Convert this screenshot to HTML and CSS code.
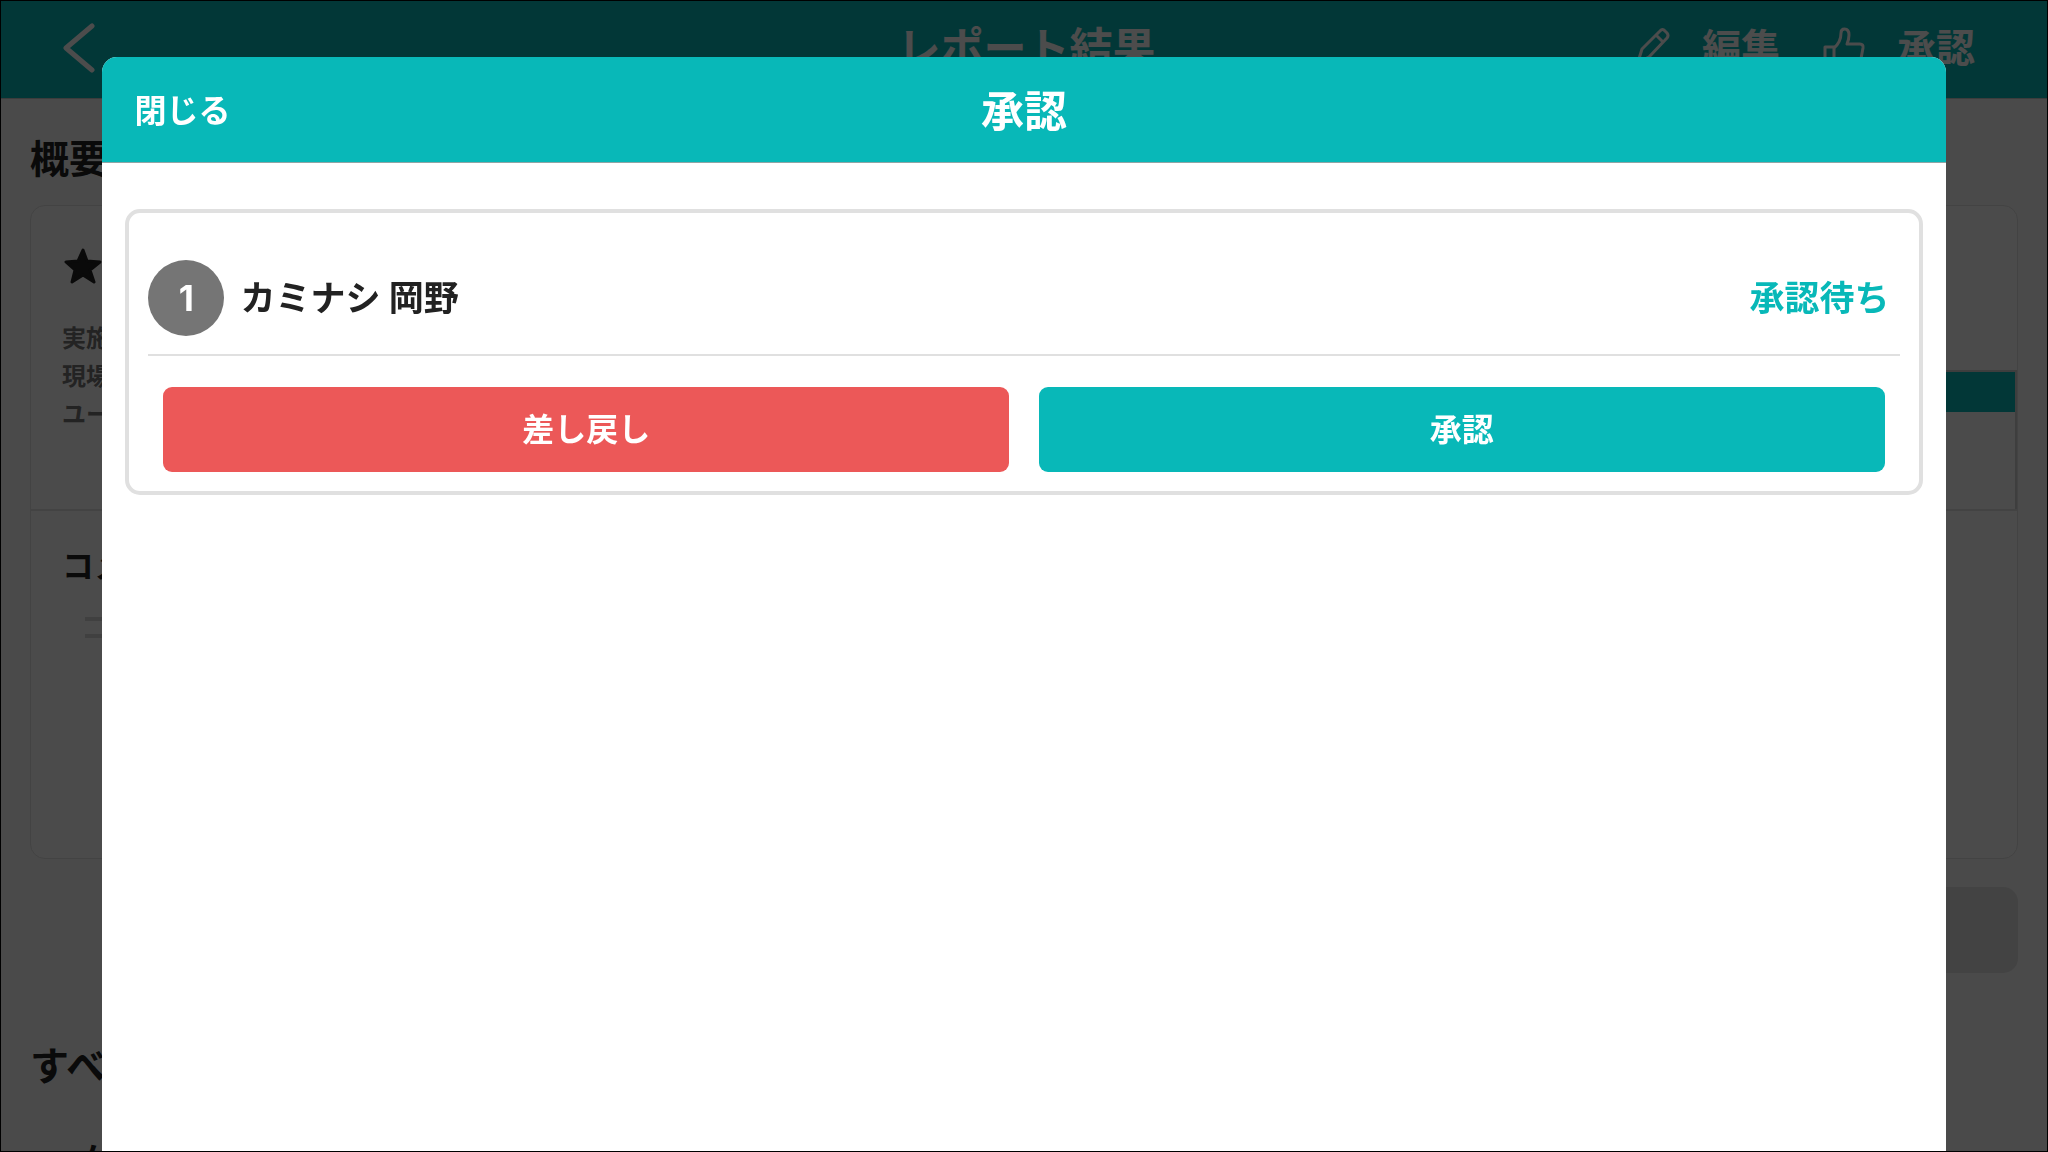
FILE: index.html
```html
<!DOCTYPE html>
<html lang="ja">
<head>
    <meta charset="UTF-8">
    <meta name="viewport" content="width=device-width, initial-scale=1.0">
    <title>レポート結果</title>
    <link rel="stylesheet" href="styles.css">
</head>
<body>

    <div class="page">
        <header class="page-header">
            <button class="back-button" type="button" aria-label="戻る">
                <svg width="34" height="50" viewBox="0 0 34 50"><path d="M30 3 L4 25 L30 47"/></svg>
            </button>
            <h1>レポート結果</h1>
            <nav class="page-actions">
                <button class="action" type="button">
                    <svg width="36" height="42" viewBox="0 0 36 42"><path d="M4 35 L8 22 L26 4 Q28.500 1 31 4 L33 6 Q35 8.500 33 11 L15 30 Z M22 8 L29 15"/></svg>
                    編集
                </button>
                <button class="action" type="button">
                    <svg width="42" height="42" viewBox="0 0 42 42"><path d="M2 20 H11 V40 H2 Z M11 21 Q18 15 18 6 Q18 2 21.500 2 Q26 2 26 8 Q26 12 24 17 H37 Q40.500 17 40 21 L37 37 Q36 40 33 40 H11"/></svg>
                    承認
                </button>
            </nav>
        </header>

        <main class="page-body">
            <h2>概要</h2>
            <section class="report-card">
                <div class="report-summary">
                    <div class="report-info">
                        <svg class="star" width="40" height="40" viewBox="0 0 40 40"><path d="M21 4 L25 15 L38 16 L28 24 L32 36 L21 29 L10 36 L13 24 L4 16 L16 15 Z"/></svg>
                        <p>実施日</p>
                        <p>現場</p>
                        <p>ユーザー</p>
                    </div>
                    <div class="report-result">
                        <div class="result-head"></div>
                    </div>
                </div>
                <div class="report-comment">
                    <h3>コメント</h3>
                    <div class="comment-lines"></div>
                </div>
            </section>
            <button class="more-button" type="button" aria-label="詳細"></button>
            <h2>すべて</h2>
            <p class="next-item">ケース</p>
        </main>
    </div>

    <div class="modal-overlay">
        <div class="modal" role="dialog" aria-labelledby="modal-title">
            <div class="modal-header">
                <button class="close-button" type="button">閉じる</button>
                <h2 id="modal-title">承認</h2>
            </div>
            <div class="modal-body">
                <div class="approval-card">
                    <div class="approver">
                        <span class="step">1</span>
                        <span class="name">カミナシ 岡野</span>
                        <span class="status">承認待ち</span>
                    </div>
                    <div class="approval-buttons">
                        <button class="btn btn-reject" type="button">差し戻し</button>
                        <button class="btn btn-approve" type="button">承認</button>
                    </div>
                </div>
            </div>
        </div>
    </div>

</body>
</html>
```
FILE: styles.css
```css
:root {
    --teal: #08b8b8;
    --red: #ec5858;
    --line: #e0e0e0;
    --text: #222;
}

* { box-sizing: border-box; }

body {
    margin: 0;
    height: 100vh;
    overflow: hidden;
    font-family: Inter, "Noto Sans CJK JP", sans-serif;
    font-weight: 700;
    color: var(--text);
}

h1, h2, h3, p { margin: 0; }

button {
    font: inherit;
    color: inherit;
    border: none;
    padding: 0;
    background: none;
    cursor: pointer;
}

/* --- report page --- */
.page {
    height: 100vh;
    overflow: hidden;
    background: #f7f7f7;
}

.page-header {
    display: grid;
    grid-template-columns: 1fr auto 1fr;
    align-items: center;
    height: 99px;
    padding: 0 73px 2px 78px;
    background: var(--teal);
    border-bottom: 1px solid #c8c8c8;
    color: #fff;
}
.page-header h1 { font-size: 43px; line-height: 64px; }
.page-header svg {
    fill: none;
    stroke: currentColor;
    stroke-width: 3;
    stroke-linejoin: round;
    stroke-linecap: round;
}
.page-header .back-button svg { display: block; stroke-width: 5; }
.back-button {
    justify-self: start;
    height: 50px;
    margin-left: -16px;
}
.page-actions {
    display: flex;
    justify-content: flex-end;
    gap: 43px;
}
.action {
    display: flex;
    align-items: center;
    gap: 32px;
    font-size: 39px;
    line-height: 56px;
}

.page-body { padding: 30px; }
.page-body h2 { font-size: 39px; line-height: 60px; color: #222; }

.report-card {
    margin: 16px 0 28px;
    background: #fcfcfc;
    border: 1px solid var(--line);
    border-radius: 15px;
}
.report-summary {
    display: flex;
    height: 305px;
    border-bottom: 2px solid var(--line);
}
.report-info {
    flex: 1;
    padding: 40px 31px;
    font-size: 24px;
    line-height: 38px;
    color: #757575;
}
.star {
    display: block;
    margin-bottom: 34px;
    fill: #222;
    stroke: #222;
    stroke-width: 3;
    stroke-linejoin: round;
}
.report-result {
    width: 400px;
    margin-top: 164px;
    border: 2px solid #d0d0d0;
    border-bottom: none;
}
.result-head { height: 40px; background: var(--teal); }
.report-comment { height: 347px; padding: 32px 31px; }
.report-comment h3 { font-size: 32px; line-height: 48px; color: #222; }
.comment-lines {
    width: 100px;
    height: 21px;
    margin: 26px 23px;
    border-top: 4px solid #d8d8d8;
    border-bottom: 4px solid #d8d8d8;
}
.more-button {
    display: block;
    width: 50%;
    height: 86px;
    margin: 0 0 63px auto;
    border-radius: 15px;
    background: var(--line);
}
.next-item {
    padding: 40px 52px;
    font-size: 32px;
    line-height: 48px;
}

/* --- approval modal --- */
.modal-overlay {
    position: fixed;
    inset: 0;
    display: flex;
    justify-content: center;
    padding-top: 57px;
    background: rgba(0, 0, 0, 0.7);
    box-shadow: inset 0 0 0 1px #000;
}
.modal {
    width: 90%;
    margin-bottom: 1px;
    overflow: hidden;
    background: #fff;
    border-radius: 15px 15px 0 0;
}
.modal-header {
    display: grid;
    grid-template-columns: 1fr auto 1fr;
    align-items: center;
    height: 106px;
    padding: 2px 32px 0;
    background: var(--teal);
    border-bottom: 1px solid #8fa5a5;
    color: #fff;
}
.modal-header h2 { font-size: 43px; line-height: 64px; }
.close-button { justify-self: start; font-size: 32px; line-height: 48px; }

.modal-body { padding: 46px 23px; }
.approval-card {
    padding: 0 19px 19px;
    border: 4px solid var(--line);
    border-radius: 15px;
}
.approver {
    display: flex;
    align-items: center;
    gap: 16px;
    padding: 47px 10px 18px 0;
    border-bottom: 2px solid var(--line);
    font-size: 35px;
    line-height: 52px;
}
.step {
    width: 76px;
    border-radius: 50%;
    background: #757575;
    color: #fff;
    font-size: 35px;
    line-height: 76px;
    text-align: center;
}
.status { margin-left: auto; color: var(--teal); }

.approval-buttons {
    display: flex;
    gap: 30px;
    padding: 31px 15px 0;
}
.btn {
    flex: 1;
    height: 85px;
    border-radius: 9px;
    color: #fff;
    font-size: 32px;
    line-height: 48px;
}
.btn-reject { background: var(--red); }
.btn-approve { background: var(--teal); }
```
